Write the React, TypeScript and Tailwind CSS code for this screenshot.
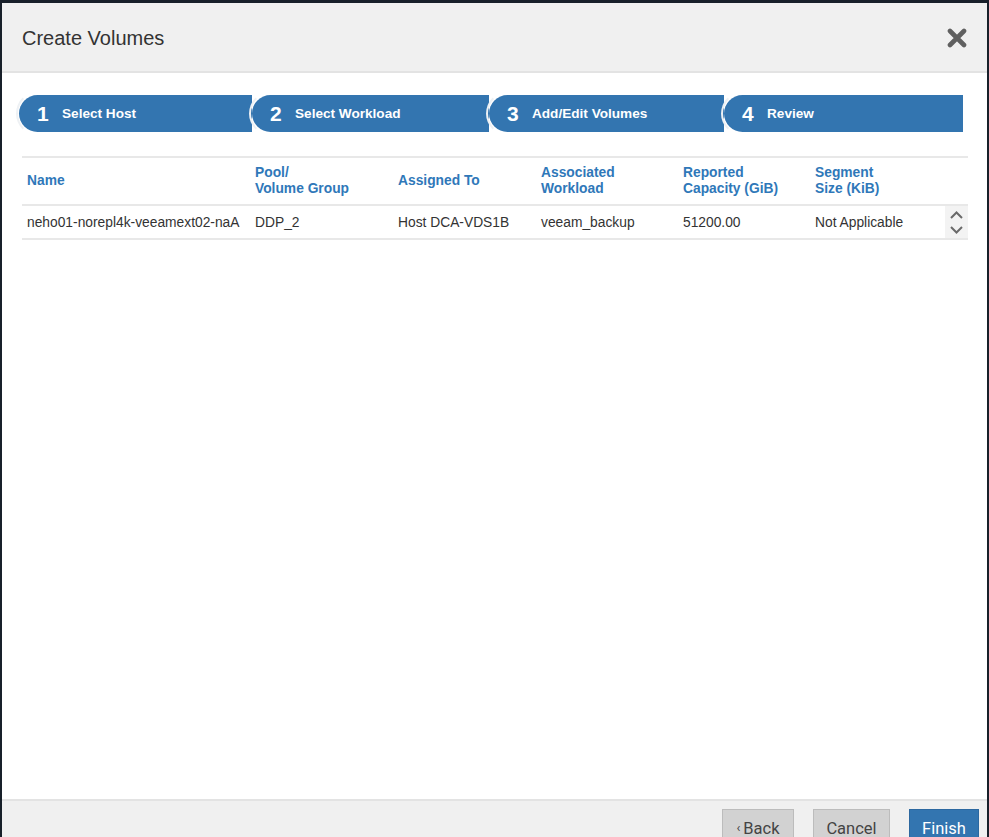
const steps = [
  { n: 1, label: "Select Host", w: "w-[233px]" },
  { n: 2, label: "Select Workload", w: "w-[237px]" },
  { n: 3, label: "Add/Edit Volumes", w: "w-[235px]" },
  { n: 4, label: "Review", w: "flex-1" },
];

const columns = [
  { label: ["Name"], w: "w-[228px]" },
  { label: ["Pool/", "Volume Group"], w: "w-[143px]" },
  { label: ["Assigned To"], w: "w-[143px]" },
  { label: ["Associated", "Workload"], w: "w-[142px]" },
  { label: ["Reported", "Capacity (GiB)"], w: "w-[132px]" },
  { label: ["Segment", "Size (KiB)"], w: "w-[135px]" },
];

const row = [
  "neho01-norepl4k-veeamext02-naA",
  "DDP_2",
  "Host DCA-VDS1B",
  "veeam_backup",
  "51200.00",
  "Not Applicable",
];

function CloseIcon() {
  return (
    <svg width="20" height="20" viewBox="0 0 20 20">
      <path d="M3 3 L17 17 M17 3 L3 17" stroke="#606060" strokeWidth="4.6" strokeLinecap="round" />
    </svg>
  );
}

function Chevron({ up }: { up?: boolean }) {
  return (
    <svg width="15" height="10" viewBox="0 0 15 10">
      <polyline
        points={up ? "2,8 7.5,2.5 13,8" : "2,2 7.5,7.5 13,2"}
        fill="none"
        stroke="#6a6a6a"
        strokeWidth="2"
      />
    </svg>
  );
}

export default function App() {
  return (
    <div
      className="h-[837px] w-[989px] bg-[#18202a] pt-[3px] pl-[2px] pr-[2px] overflow-hidden"
      style={{ fontFamily: '"Liberation Sans", Arial, sans-serif' }}
    >
      <div className="h-full bg-white flex flex-col overflow-hidden">
        {/* header */}
        <div className="h-[70px] shrink-0 bg-[#f0f0f0] border-b-2 border-[#e3e3e3] flex items-center justify-between pl-[20px] pr-[20px] pt-[2px]">
          <h1 className="text-[20px] text-[#333] leading-none">Create Volumes</h1>
          <CloseIcon />
        </div>

        {/* body */}
        <div className="flex-1 pt-[22px] pl-[17px] pr-[24px]">
          {/* wizard steps */}
          <div className="flex h-[37px]">
            {steps.map((s) => (
              <div
                key={s.n}
                className={`${s.w} relative bg-[#3375b0] rounded-l-[19px] flex items-center text-white`}
              >
                <span className="absolute -left-[3px] -top-[4px] w-[46px] h-[45px] rounded-full border-[2.5px] border-transparent border-l-[#eef1f4]" />
                <span className="ml-[18px] w-[14px] text-[21px] font-bold leading-none">{s.n}</span>
                <span className="ml-[11px] pt-[2px] text-[13.6px] font-bold">{s.label}</span>
              </div>
            ))}
          </div>

          {/* table */}
          <div className="mt-[24px] ml-[3px] mr-[-5px] border-t-2 border-[#e8e8e8]">
            <div className="flex h-[48px] items-center border-b-2 border-[#e8e8e8]">
              {columns.map((c) => (
                <div key={c.label[0]} className={`${c.w} pl-[5px] text-[13.8px] font-bold text-[#2f78b9] leading-[16px]`}>
                  {c.label.map((l) => (
                    <div key={l}>{l}</div>
                  ))}
                </div>
              ))}
            </div>
            <div className="flex h-[34px] items-center border-b-2 border-[#e8e8e8]">
              {row.map((v, i) => (
                <div key={i} className={`${columns[i].w} pl-[5px] pt-[2px] text-[13.8px] text-[#333]`}>
                  {v}
                </div>
              ))}
              <div className="flex-1 h-full bg-[#f3f3f3] flex flex-col items-center justify-center gap-[5px]">
                <Chevron up />
                <Chevron />
              </div>
            </div>
          </div>
        </div>

        {/* footer */}
        <div
          className="h-[38px] shrink-0 bg-[#f0f0f0] border-t-2 border-[#e3e3e3] flex justify-end items-start pt-[8px] pr-[8px] gap-[19px]"
          style={{ fontFamily: "Roboto, sans-serif" }}
        >
          <button className="h-[38px] w-[72px] shrink-0 bg-[#d2d2d2] border border-[#bcbcbc] text-[16.5px] text-[#444] flex items-start pt-[7px] justify-center gap-[3px]">
            <span className="text-[13px] mt-[1px]">‹</span>Back
          </button>
          <button className="h-[38px] w-[77px] shrink-0 bg-[#d2d2d2] border border-[#bcbcbc] text-[16.5px] text-[#444] flex items-start pt-[7px] justify-center">
            Cancel
          </button>
          <button className="h-[38px] w-[70px] shrink-0 bg-[#3375b0] border border-[#2c68a0] text-[16.5px] text-white flex items-start pt-[7px] justify-center">
            Finish
          </button>
        </div>
      </div>
    </div>
  );
}
